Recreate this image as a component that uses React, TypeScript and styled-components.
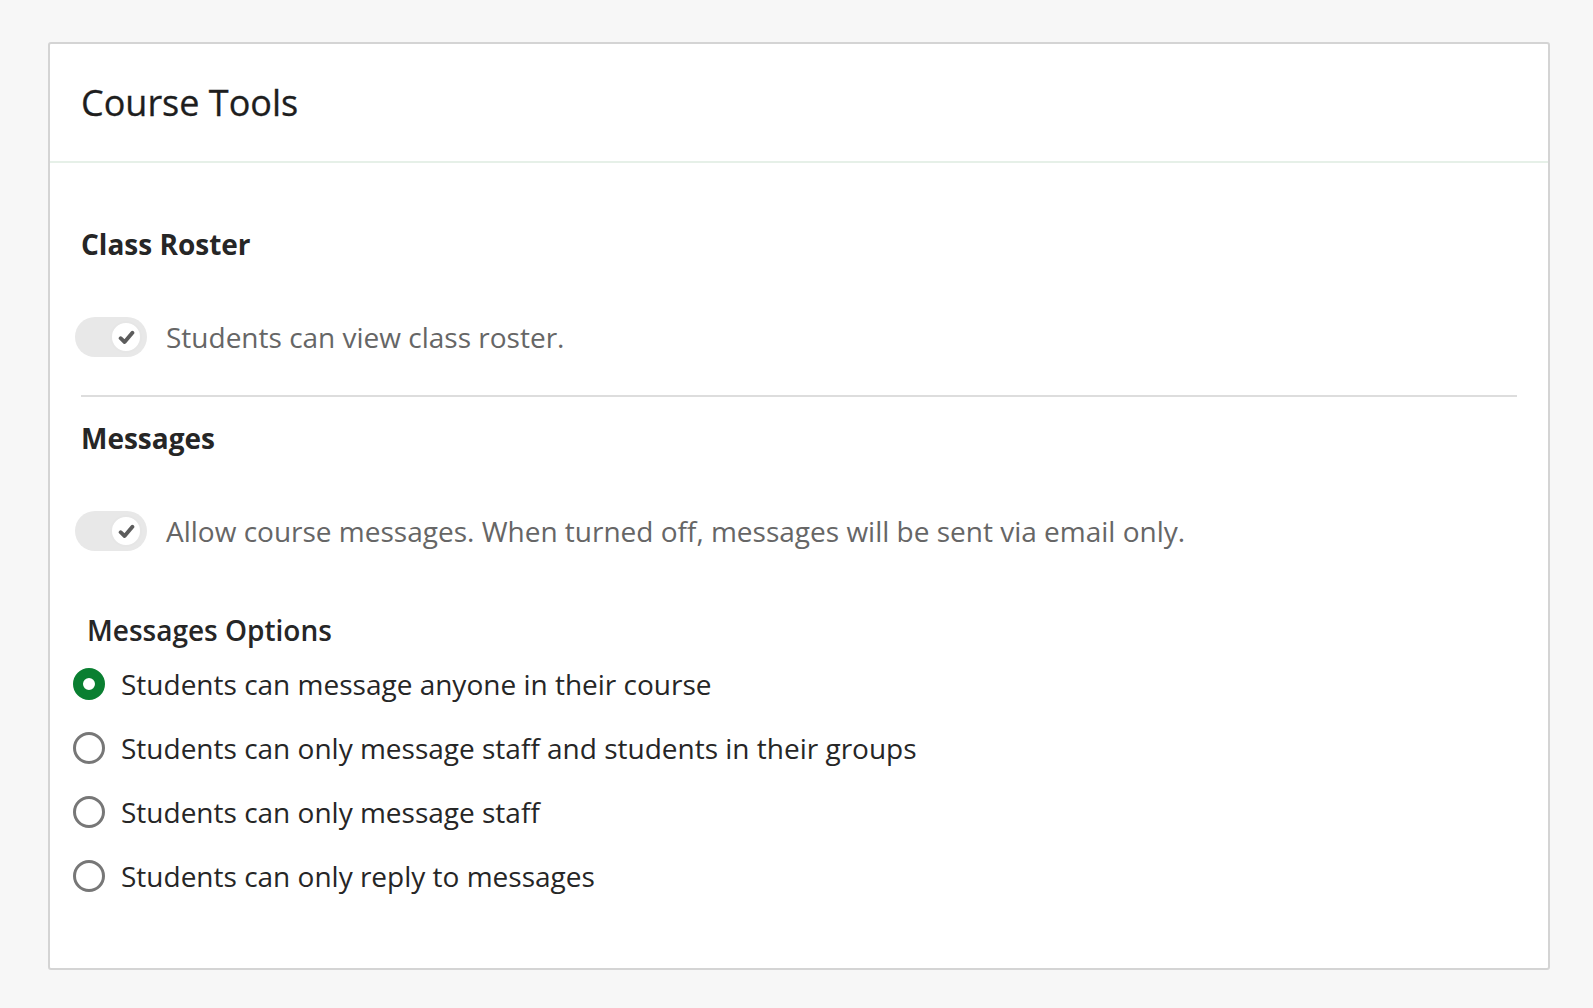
import React, { useState } from 'react';
import styled, { createGlobalStyle } from 'styled-components';

const GlobalStyle = createGlobalStyle`
  html, body {
    margin: 0;
    padding: 0;
    background: #f7f7f7;
  }

  body {
    font-family: 'Open Sans', 'Liberation Sans', sans-serif;
    color: #262626;
  }
`;

const Page = styled.div`
  padding: 42px 43px 40px 48px;
`;

const Card = styled.section`
  background: #ffffff;
  border: 2px solid #d4d4d4;
  border-radius: 3px;
`;

const CardHeader = styled.header`
  padding: 34px 31px 34px;
  border-bottom: 2px solid #e6f0e8;

  h1 {
    margin: 0;
    font-size: 36px;
    line-height: 49px;
    font-weight: 400;
    color: #1e1e1e;
    -webkit-text-stroke: 0.3px #1e1e1e;
  }
`;

const CardBody = styled.div`
  padding: 62px 31px 60px;
`;

const Section = styled.div<{ $divider?: boolean }>`
  padding-bottom: ${(p) => (p.$divider ? '38px' : '0')};
  margin-bottom: ${(p) => (p.$divider ? '22px' : '0')};
  border-bottom: ${(p) => (p.$divider ? '2px solid #dddddd' : 'none')};
`;

const SectionTitle = styled.h2`
  margin: 0 0 54px;
  font-size: 28px;
  line-height: 38px;
  font-weight: 700;
  color: #262626;
`;

const ToggleRow = styled.label`
  display: flex;
  align-items: center;
  gap: 19px;
  margin-left: -6px;
  height: 40px;
  font-size: 28px;
  color: #666666;
  cursor: pointer;
`;

const Track = styled.span`
  position: relative;
  flex: none;
  width: 72px;
  height: 40px;
  border-radius: 20px;
  background: #e8e8e8;
`;

const Knob = styled.span<{ $on: boolean }>`
  position: absolute;
  top: 4px;
  left: ${(p) => (p.$on ? '35px' : '5px')};
  width: 32px;
  height: 32px;
  box-sizing: border-box;
  border-radius: 50%;
  background: #ffffff;
  border: 2px solid #e6e6e6;
  display: flex;
  align-items: center;
  justify-content: center;
`;

const Fieldset = styled.fieldset`
  margin: 60px 0 0;
  padding: 0;
  border: none;
`;

const Legend = styled.legend`
  padding: 0 0 0 6px;
  font-size: 28px;
  line-height: 38px;
  font-weight: 600;
  color: #262626;
`;

const RadioList = styled.div`
  display: flex;
  flex-direction: column;
  margin-top: 3px;
`;

const RadioRow = styled.label`
  display: flex;
  align-items: center;
  gap: 16px;
  height: 64px;
  margin-left: -8px;
  font-size: 28px;
  color: #262626;
  cursor: pointer;
`;

const RadioDot = styled.span<{ $checked: boolean }>`
  flex: none;
  width: 32px;
  height: 32px;
  box-sizing: border-box;
  border-radius: 50%;
  background: #ffffff;
  border: ${(p) => (p.$checked ? '10px solid #0a7f31' : '3.5px solid #777777')};
`;

const CheckIcon = () => (
  <svg width="17" height="15" viewBox="0 0 17 15" aria-hidden="true">
    <path
      d="M2.6 8.2 L6.6 12 L14.4 2.8"
      fill="none"
      stroke="#5c5c5c"
      strokeWidth="3.8"
      strokeLinecap="round"
      strokeLinejoin="round"
    />
  </svg>
);

const Toggle = ({ label }: { label: string }) => {
  const [on, setOn] = useState(true);
  return (
    <ToggleRow onClick={() => setOn(!on)}>
      <Track>
        <Knob $on={on}>{on && <CheckIcon />}</Knob>
      </Track>
      {label}
    </ToggleRow>
  );
};

const options = [
  'Students can message anyone in their course',
  'Students can only message staff and students in their groups',
  'Students can only message staff',
  'Students can only reply to messages',
];

const App = () => {
  const [selected, setSelected] = useState(0);

  return (
    <Page>
      <GlobalStyle />
      <Card>
        <CardHeader>
          <h1>Course Tools</h1>
        </CardHeader>
        <CardBody>
          <Section $divider>
            <SectionTitle>Class Roster</SectionTitle>
            <Toggle label="Students can view class roster." />
          </Section>
          <Section>
            <SectionTitle>Messages</SectionTitle>
            <Toggle label="Allow course messages. When turned off, messages will be sent via email only." />
            <Fieldset>
              <Legend>Messages Options</Legend>
              <RadioList>
                {options.map((text, i) => (
                  <RadioRow key={text} onClick={() => setSelected(i)}>
                    <RadioDot $checked={selected === i} />
                    {text}
                  </RadioRow>
                ))}
              </RadioList>
            </Fieldset>
          </Section>
        </CardBody>
      </Card>
    </Page>
  );
};

export default App;
